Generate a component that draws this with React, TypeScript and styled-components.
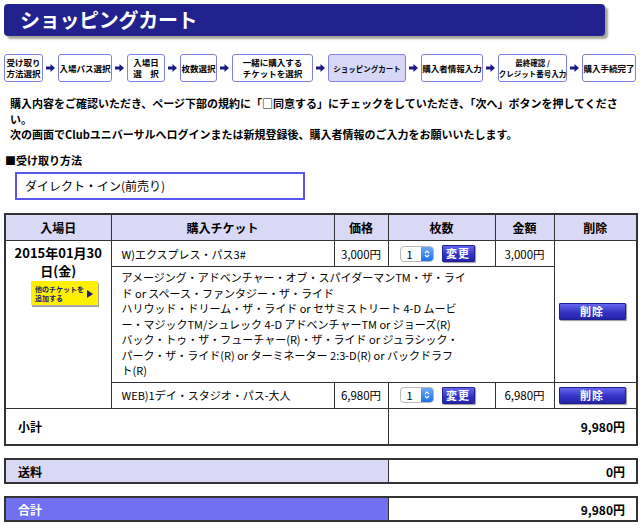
import React from 'react';
import styled, { createGlobalStyle } from 'styled-components';

const GlobalStyle = createGlobalStyle`
  html, body { margin: 0; padding: 0; background: #fff; }
  body {
    font-family: "Noto Sans CJK JP", "Noto Sans", "Liberation Sans", sans-serif;
    color: #000;
  }
`;

const Page = styled.div`
  width: 640px;
  box-sizing: border-box;
  padding: 4px;
`;

const TitleBar = styled.h1`
  margin: 0;
  width: 601px;
  height: 32px;
  box-sizing: border-box;
  padding-left: 16px;
  background: #22228e;
  border-radius: 4px;
  box-shadow: 3px 3px 2px rgba(130, 130, 110, 0.7);
  color: #fff;
  font-size: 20px;
  font-weight: 700;
  line-height: 32px;
  letter-spacing: -0.3px;
`;

const Steps = styled.div`
  display: flex;
  align-items: center;
  margin-top: 18px;
  height: 28px;
`;

const StepBox = styled.div<{ $w: number; $current?: boolean; $small?: boolean }>`
  flex: none;
  width: ${(p) => p.$w}px;
  height: 28px;
  box-sizing: border-box;
  border: 1px solid #8080e6;
  border-radius: 3px;
  background: ${(p) => (p.$current ? '#d8d8f6' : '#fff')};
  display: flex;
  align-items: center;
  justify-content: center;
  text-align: center;
  font-size: ${(p) => (p.$small ? 7.5 : 8.5)}px;
  font-weight: 700;
  line-height: 11px;
  white-space: nowrap;
`;

const StepArrowSvg = styled.svg`
  flex: none;
  margin: 0 3px;
`;

const Notice = styled.p`
  margin: 14px 0 0;
  padding: 0 2px 0 6px;
  font-size: 11px;
  font-weight: 700;
  line-height: 15.5px;
`;

const SectionLabel = styled.div`
  margin: 9px 0 0 1px;
  font-size: 11px;
  font-weight: 700;
  line-height: 16px;
`;

const MethodBox = styled.div`
  margin: 4px 0 0 11px;
  width: 290px;
  height: 28px;
  box-sizing: border-box;
  border: 2px solid #5858ec;
  padding-left: 8px;
  font-size: 12px;
  line-height: 24px;
`;

const CartTable = styled.table`
  margin-top: 13px;
  width: 632px;
  border-collapse: collapse;
  table-layout: fixed;
  border: 2px solid #333;
`;

const Row = styled.tr<{ $h?: number }>`
  ${(p) => (p.$h ? `height: ${p.$h}px;` : '')}
`;

const Th = styled.th`
  border: 1px solid #333;
  background: #d9d9f5;
  font-size: 12px;
  font-weight: 700;
  text-align: center;
  padding: 0;
`;

const Td = styled.td`
  border: 1px solid #333;
  padding: 0;
  font-size: 11px;
  vertical-align: middle;
`;

const DateCell = styled(Td)`
  vertical-align: top;
  text-align: center;
  padding-top: 3px;
`;

const DateText = styled.div`
  font-size: 13px;
  font-weight: 700;
  line-height: 18px;
`;

const AddTicketButton = styled.div`
  margin: 1px 0 0 25px;
  width: 67px;
  height: 24px;
  box-sizing: border-box;
  padding: 1px 5px 0 4px;
  background: #fff000;
  box-shadow: 1px 2px 0 #a8a8a8;
  display: flex;
  align-items: center;
  justify-content: space-between;
  text-align: left;
  color: #1a1a6e;
  font-size: 7px;
  font-weight: 700;
  line-height: 9px;
  white-space: nowrap;
`;

const TicketCell = styled(Td)`
  padding-left: 10px;
`;

const PriceCell = styled(Td)`
  text-align: center;
  font-size: 11.5px;
`;

const QtyCell = styled(Td)`
  padding-left: 11px;
`;

const QtyControl = styled.div`
  display: flex;
  align-items: center;
  gap: 8px;
`;

const QtySelect = styled.div`
  display: flex;
  width: 34px;
  height: 16px;
  box-sizing: border-box;
  border: 1px solid #b8b8b8;
  border-radius: 4px;
  background: #fff;
  overflow: hidden;
`;

const QtyValue = styled.span`
  flex: 1;
  padding-left: 6px;
  font-size: 11px;
  line-height: 14px;
`;

const Stepper = styled.span`
  width: 12px;
  background: linear-gradient(#6aaaf8, #1e70ea);
  display: flex;
  align-items: center;
  justify-content: center;
`;

const BlueButton = styled.button<{ $w: number }>`
  width: ${(p) => p.$w}px;
  height: 17px;
  padding: 0;
  border: 1px solid #20208e;
  border-radius: 1px;
  background: linear-gradient(#6666f0, #3434c4 55%, #2424aa);
  box-shadow: 1px 1px 1px rgba(0, 0, 0, 0.4);
  color: #fff;
  font-family: inherit;
  font-size: 11px;
  font-weight: 700;
  line-height: 15px;
  letter-spacing: 1px;
`;

const DeleteCell = styled(Td)`
  padding-left: 4px;
`;

const DescCell = styled(Td)`
  padding: 3px 10px;
  line-height: 15.5px;
`;

const DescLine = styled.div`
  white-space: nowrap;
`;

const SumLabel = styled(Td)<{ $variant?: 'plain' | 'fee' | 'total' }>`
  padding-left: 12px;
  font-size: 12px;
  font-weight: 700;
  background: ${(p) =>
    p.$variant === 'fee' ? '#d9d9f5' : p.$variant === 'total' ? '#7070f0' : '#fff'};
  color: ${(p) => (p.$variant === 'total' ? '#fff' : '#000')};
`;

const SumValue = styled(Td)`
  padding-right: 11px;
  text-align: right;
  font-size: 12px;
  font-weight: 700;
`;

const SummaryTable = styled.table`
  margin-top: 12px;
  width: 632px;
  border-collapse: collapse;
  table-layout: fixed;
  border: 2px solid #333;
`;

const StepArrow = () => (
  <StepArrowSvg width="9" height="8" viewBox="0 0 9 8">
    <path d="M0 2.5h4.5V0L9 4 4.5 8V5.5H0z" fill="#1a1a80" />
  </StepArrowSvg>
);

const StepperIcon = () => (
  <svg width="6" height="10" viewBox="0 0 6 10">
    <path d="M1 4 3 2l2 2M1 6l2 2 2-2" fill="none" stroke="#fff" strokeWidth="1.2" />
  </svg>
);

const PlayIcon = () => (
  <svg width="6" height="8" viewBox="0 0 6 8">
    <path d="M0 0l6 4-6 4z" fill="#1a1a80" />
  </svg>
);

const steps: { w: number; lines: string[]; current?: boolean; small?: boolean }[] = [
  { w: 39, lines: ['受け取り', '方法選択'] },
  { w: 54, lines: ['入場パス選択'] },
  { w: 38, lines: ['入場日', '選　択'] },
  { w: 37, lines: ['枚数選択'] },
  { w: 81, lines: ['一緒に購入する', 'チケットを選択'] },
  { w: 78, lines: ['ショッピングカート'], current: true, small: true },
  { w: 62, lines: ['購入者情報入力'] },
  { w: 69, lines: ['最終確認 /', 'クレジット番号入力'], small: true },
  { w: 54, lines: ['購入手続完了'] },
];

const descLines = [
  'アメージング・アドベンチャー・オブ・スパイダーマンTM・ザ・ライ',
  'ド or スペース・ファンタジー・ザ・ライド',
  'ハリウッド・ドリーム・ザ・ライド or セサミストリート 4-D ムービ',
  'ー・マジックTM/シュレック 4-D アドベンチャーTM or ジョーズ(R)',
  'バック・トゥ・ザ・フューチャー(R)・ザ・ライド or ジュラシック・',
  'パーク・ザ・ライド(R) or ターミネーター 2:3-D(R) or バックドラフ',
  'ト(R)',
];

const Qty = () => (
  <QtyControl>
    <QtySelect>
      <QtyValue>1</QtyValue>
      <Stepper>
        <StepperIcon />
      </Stepper>
    </QtySelect>
    <BlueButton $w={33}>変更</BlueButton>
  </QtyControl>
);

export default function App() {
  return (
    <Page>
      <GlobalStyle />
      <TitleBar>ショッピングカート</TitleBar>
      <Steps>
        {steps.map((s, i) => (
          <React.Fragment key={i}>
            {i > 0 && <StepArrow />}
            <StepBox $w={s.w} $current={s.current} $small={s.small}>
              <div>
                {s.lines.map((l, j) => (
                  <div key={j}>{l}</div>
                ))}
              </div>
            </StepBox>
          </React.Fragment>
        ))}
      </Steps>
      <Notice>
        購入内容をご確認いただき、ページ下部の規約に「□同意する」にチェックをしていただき、「次へ」ボタンを押してください。
        <br />
        次の画面でClubユニバーサルへログインまたは新規登録後、購入者情報のご入力をお願いいたします。
      </Notice>
      <SectionLabel>■受け取り方法</SectionLabel>
      <MethodBox>ダイレクト・イン(前売り)</MethodBox>

      <CartTable>
        <colgroup>
          <col style={{ width: 106 }} />
          <col style={{ width: 223 }} />
          <col style={{ width: 54 }} />
          <col style={{ width: 107 }} />
          <col style={{ width: 59 }} />
          <col style={{ width: 83 }} />
        </colgroup>
        <thead>
          <Row $h={27}>
            <Th>入場日</Th>
            <Th>購入チケット</Th>
            <Th>価格</Th>
            <Th>枚数</Th>
            <Th>金額</Th>
            <Th>削除</Th>
          </Row>
        </thead>
        <tbody>
          <Row $h={26}>
            <DateCell rowSpan={3}>
              <DateText>
                2015年01月30
                <br />
                日(金)
              </DateText>
              <AddTicketButton>
                <span>
                  他のチケットを
                  <br />
                  追加する
                </span>
                <PlayIcon />
              </AddTicketButton>
            </DateCell>
            <TicketCell>W)エクスプレス・パス3#</TicketCell>
            <PriceCell>3,000円</PriceCell>
            <QtyCell>
              <Qty />
            </QtyCell>
            <PriceCell>3,000円</PriceCell>
            <DeleteCell rowSpan={2}>
              <BlueButton $w={67}>削除</BlueButton>
            </DeleteCell>
          </Row>
          <Row>
            <DescCell colSpan={4}>
              {descLines.map((l, i) => (
                <DescLine key={i}>{l}</DescLine>
              ))}
            </DescCell>
          </Row>
          <Row $h={26}>
            <TicketCell>WEB)1デイ・スタジオ・パス-大人</TicketCell>
            <PriceCell>6,980円</PriceCell>
            <QtyCell>
              <Qty />
            </QtyCell>
            <PriceCell>6,980円</PriceCell>
            <DeleteCell>
              <BlueButton $w={67}>削除</BlueButton>
            </DeleteCell>
          </Row>
          <Row $h={37}>
            <SumLabel colSpan={3}>小計</SumLabel>
            <SumValue colSpan={3}>9,980円</SumValue>
          </Row>
        </tbody>
      </CartTable>

      <SummaryTable>
        <colgroup>
          <col style={{ width: 383 }} />
          <col style={{ width: 249 }} />
        </colgroup>
        <tbody>
          <Row $h={24}>
            <SumLabel $variant="fee">送料</SumLabel>
            <SumValue>0円</SumValue>
          </Row>
        </tbody>
      </SummaryTable>

      <SummaryTable>
        <colgroup>
          <col style={{ width: 383 }} />
          <col style={{ width: 249 }} />
        </colgroup>
        <tbody>
          <Row $h={24}>
            <SumLabel $variant="total">合計</SumLabel>
            <SumValue>9,980円</SumValue>
          </Row>
        </tbody>
      </SummaryTable>
    </Page>
  );
}
